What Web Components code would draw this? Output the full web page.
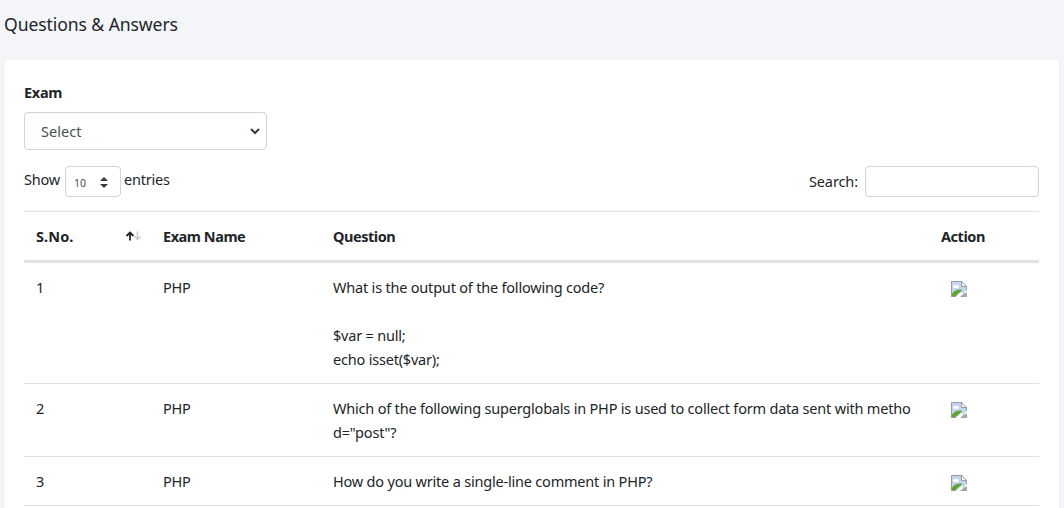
<!DOCTYPE html>
<html>
<head>
<meta charset="utf-8">
<style>
  html, body { margin: 0; height: 100%; overflow: hidden; }
  body { background: #f3f5f9; font-family: "Noto Sans", sans-serif; color: #212529; }
</style>
</head>
<body>
<qa-page>
  <qa-card>
    <exam-select></exam-select>
    <table-controls></table-controls>
    <qa-head></qa-head>
    <qa-row num="1" exam="PHP">What is the output of the following code?<br><br>$var = null;<br>echo isset($var);</qa-row>
    <qa-row num="2" exam="PHP">Which of the following superglobals in PHP is used to collect form data sent with metho<br>d="post"?</qa-row>
    <qa-row num="3" exam="PHP">How do you write a single-line comment in PHP?</qa-row>
  </qa-card>
</qa-page>

<script>
var COLS = "127px 170px 608px 110px";

var template_page = document.createElement("template");
template_page.innerHTML = `
<style>
  :host { display: block; padding: 0 5px 0 4px; }
  h1 { margin: 0; height: 60px; font-size: 17.6px; font-weight: 400; line-height: 48px; color: #212529; letter-spacing: -0.1px; }
</style>
<h1>Questions &amp; Answers</h1>
<slot></slot>
`;
class QaPage extends HTMLElement {
  constructor(){ super(); this.attachShadow({mode:"open"}); }
  connectedCallback(){ this.shadowRoot.appendChild(template_page.content.cloneNode(true)); }
}

var template_card = document.createElement("template");
template_card.innerHTML = `
<style>
  :host { display: block; background: #fff; border-radius: 4px; padding: 20px 20px 20px; box-shadow: 0 0 2px rgba(0,0,0,.08); font-size: 14.5px; }
</style>
<slot></slot>
`;
class QaCard extends HTMLElement {
  constructor(){ super(); this.attachShadow({mode:"open"}); }
  connectedCallback(){ this.shadowRoot.appendChild(template_card.content.cloneNode(true)); }
}

var template_exam = document.createElement("template");
template_exam.innerHTML = `
<style>
  :host { display: block; }
  label { display: block; font-weight: 700; font-size: 14.5px; line-height: 24px; margin-bottom: 8px; color: #212529; letter-spacing: -0.3px; height: 24px; }
  .sel { box-sizing: border-box; width: 243px; height: 38px; border: 1px solid #ced4da; border-radius: 4px; display: flex; align-items: center; justify-content: space-between; padding: 0 3px 0 16px; color: #495057; font-size: 14.5px; letter-spacing: 0.05px; }
</style>
<label>Exam</label>
<div class="sel"><span>Select</span>
  <svg width="10" height="8" viewBox="0 0 10 8" style="margin-right:3px"><path d="M1 2l4 4 4-4" fill="none" stroke="#343a40" stroke-width="2"/></svg>
</div>
`;
class ExamSelect extends HTMLElement {
  constructor(){ super(); this.attachShadow({mode:"open"}); }
  connectedCallback(){ this.shadowRoot.appendChild(template_exam.content.cloneNode(true)); }
}

var template_controls = document.createElement("template");
template_controls.innerHTML = `
<style>
  :host { display: flex; justify-content: space-between; align-items: center; height: 31px; margin-top: 16px; padding-bottom: 14px; font-size: 14.5px; color: #212529; letter-spacing: -0.2px; }
  .len { display: flex; align-items: center; gap: 4px; line-height: 24px; }
  .len span.t { margin-top: -5px; }
  .num { box-sizing: border-box; width: 56px; height: 31px; border: 1px solid #ced4da; border-radius: 4px; display: flex; align-items: center; justify-content: space-between; padding: 2px 12px 0 8px; font-size: 10.5px; color: #495057; margin-left: 1px; margin-right: -1px; letter-spacing: 0; }
  .num svg { margin-top: -1px; }
  .search { display: flex; align-items: center; gap: 7px; letter-spacing: -0.1px; }
  .search span { margin-top: -2px; }
  .box { box-sizing: border-box; width: 174px; height: 31px; border: 1px solid #ced4da; border-radius: 4px; background: #fff; padding: 0; }
</style>
<div class="len"><span class="t">Show</span>
  <div class="num"><span>10</span>
    <svg width="8" height="11" viewBox="0 0 8 11"><path d="M4 0l4 4H0zM4 11l4-4H0z" fill="#343a40"/></svg>
  </div>
  <span class="t">entries</span></div>
<div class="search"><span>Search:</span> <input class="box" type="text"></div>
`;
class TableControls extends HTMLElement {
  constructor(){ super(); this.attachShadow({mode:"open"}); }
  connectedCallback(){ this.shadowRoot.appendChild(template_controls.content.cloneNode(true)); }
}

var template_head = document.createElement("template");
template_head.innerHTML = `
<style>
  :host { display: grid; grid-template-columns: ${COLS}; border-top: 1px solid #dee2e6; border-bottom: 3px solid #dee2e6; font-weight: 700; font-size: 14.5px; line-height: 24px; letter-spacing: -0.45px; color: #212529; }
  div { padding: 12px; }
  .sno { display: flex; justify-content: space-between; align-items: center; }
  .sno span { letter-spacing: 0.1px; }
  svg { display: block; margin: 0 -3px 0 0; }
</style>
<div class="sno"><span>S.No.</span>
  <svg width="17" height="10" viewBox="0 0 17 10">
    <path d="M5 9.5V1.5M1.5 5l3.5-3.5L8.5 5" fill="none" stroke="#212529" stroke-width="1.8"/>
    <path d="M12.5 .5v8M9.5 5.5l3 3 3-3" fill="none" stroke="#c4c8cc" stroke-width="1.5"/>
  </svg>
</div>
<div>Exam Name</div>
<div>Question</div>
<div>Action</div>
`;
class QaHead extends HTMLElement {
  constructor(){ super(); this.attachShadow({mode:"open"}); }
  connectedCallback(){ this.shadowRoot.appendChild(template_head.content.cloneNode(true)); }
}

var template_row = document.createElement("template");
template_row.innerHTML = `
<style>
  :host { display: grid; grid-template-columns: ${COLS}; border-bottom: 1px solid #dee2e6; font-size: 14.5px; line-height: 24px; letter-spacing: -0.2px; color: #212529; }
  div { padding: 12px; }
  svg { display: block; margin: 6px 0 0 10px; }
</style>
<div id="num"></div>
<div id="exam"></div>
<div><slot></slot></div>
<div>
  <svg width="16" height="16" viewBox="0 0 16 16">
    <path d="M0 0H11L16 5V9L12 13 10 11 5 16H0z" fill="#c3d5f2"/>
    <path d="M2 5.5C2 4 4 3.5 5 4.2 6 3.5 8 4 8 5.5 8 6.5 7 7 5 7 3 7 2 6.5 2 5.5z" fill="#fff"/>
    <path d="M1 15V12.5C3.5 9.5 7 8 10.5 8.8L11 9.5 4.5 15z" fill="#5fa62e"/>
    <path d="M.5 15.5V.5H10.5L15.5 5.5V8.6M10.5 .5V5.5H15.5M.5 15.5H5" fill="none" stroke="#9a9a9a"/>
    <path d="M16 11.5V16H9L13 12.5z" fill="#a6a6a6"/>
    <path d="M11 1.5L14.5 5H11z" fill="#fff"/>
  </svg>
</div>
`;
class QaRow extends HTMLElement {
  constructor(){ super(); this.attachShadow({mode:"open"}); }
  connectedCallback(){
    this.shadowRoot.appendChild(template_row.content.cloneNode(true));
    this.shadowRoot.querySelector("#num").textContent = this.getAttribute("num");
    this.shadowRoot.querySelector("#exam").textContent = this.getAttribute("exam");
  }
}

customElements.define("qa-page", QaPage);
customElements.define("qa-card", QaCard);
customElements.define("exam-select", ExamSelect);
customElements.define("table-controls", TableControls);
customElements.define("qa-head", QaHead);
customElements.define("qa-row", QaRow);
</script>
</body>
</html>
